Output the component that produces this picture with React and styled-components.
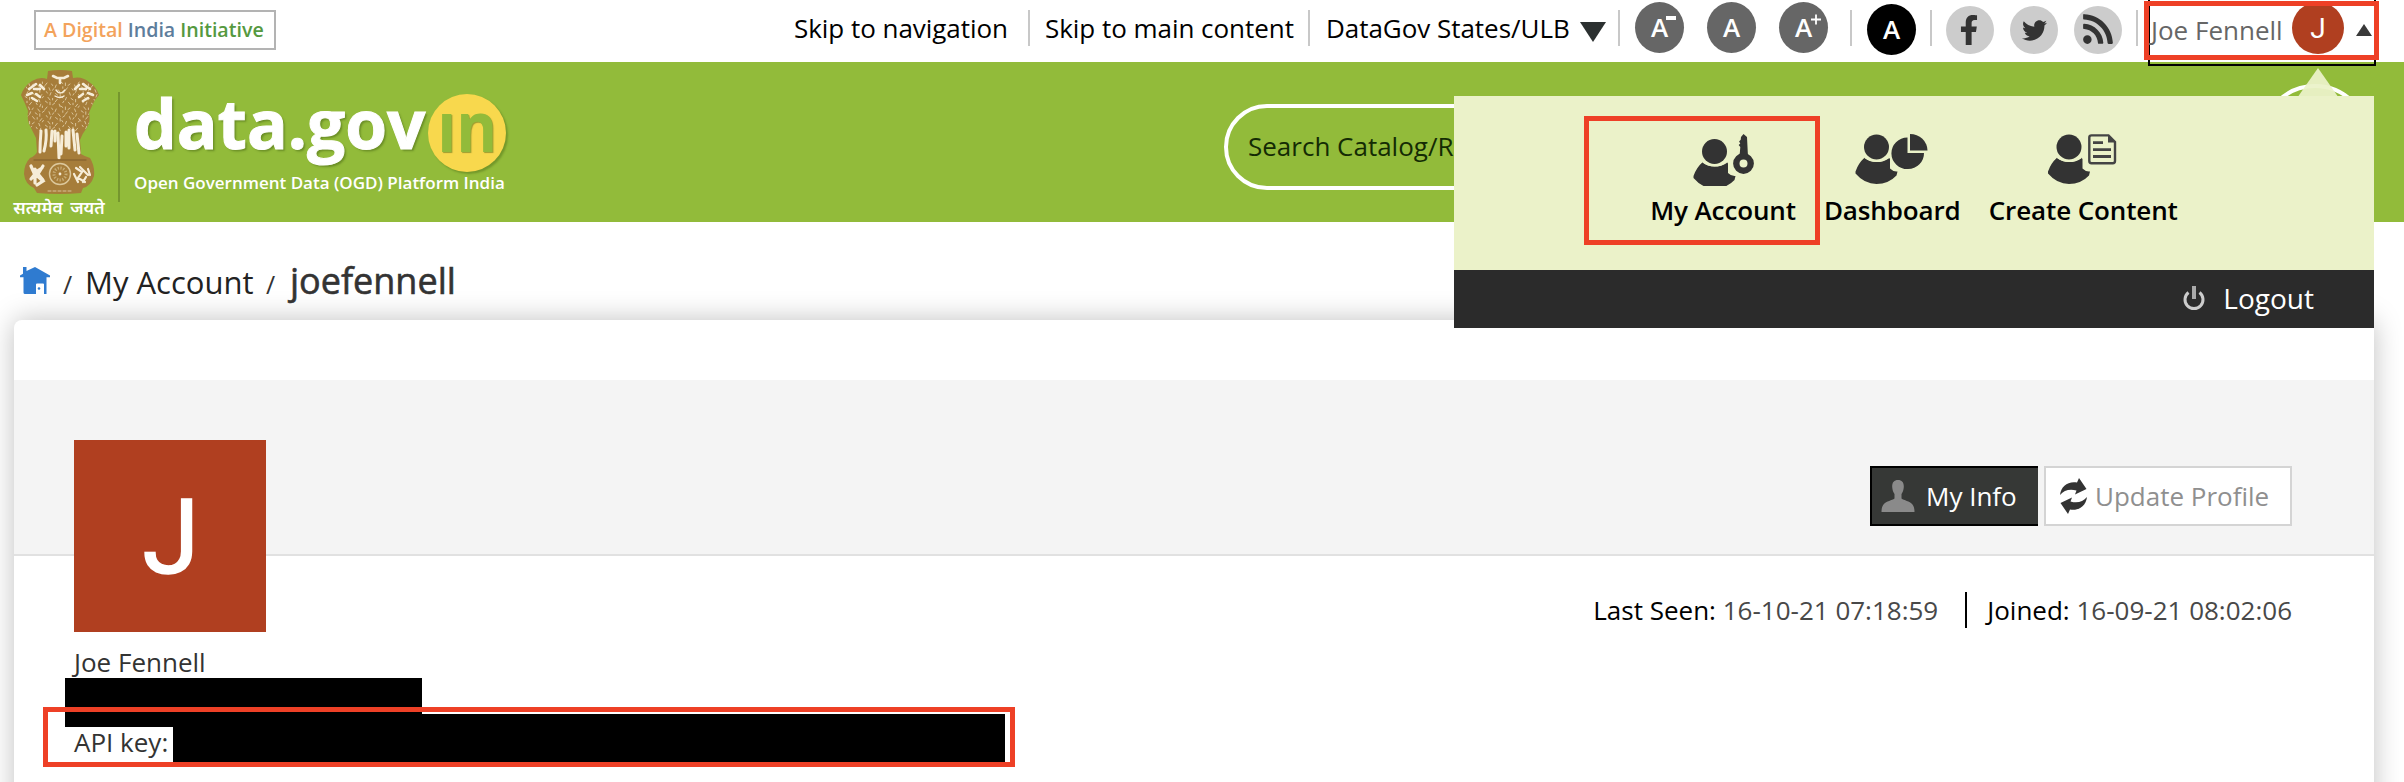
import React from "react";
import styled, { createGlobalStyle } from "styled-components";
import { FaFacebookF, FaTwitter, FaRss } from "react-icons/fa";

const GlobalStyle = createGlobalStyle`
  * { box-sizing: border-box; }
  html, body { margin: 0; padding: 0; }
  body {
    width: 2404px;
    height: 782px;
    overflow: hidden;
    background: #fff;
    color: #000;
    font-family: "Open Sans", "Noto Sans", sans-serif;
    font-size: 26px;
  }
`;

const Page = styled.div`
  position: relative;
  width: 2404px;
  height: 782px;
  overflow: hidden;
  white-space: nowrap;
`;

/* ---------- top bar ---------- */

const TopBar = styled.div`
  display: flex;
  align-items: flex-start;
  height: 62px;
  padding: 0 28px 0 34px;
`;

const InitiativeBadge = styled.div`
  display: flex;
  align-items: center;
  width: 242px;
  height: 40px;
  margin-top: 10px;
  padding: 0 0 2px 8px;
  border: 2px solid #b3b3b3;
  font-size: 19.6px;
  font-weight: 600;
  gap: 5px;
`;

const BadgeWord = styled.span`
  color: ${(p) => p.$color};
`;

const TopTools = styled.div`
  display: flex;
  align-items: flex-start;
  margin-left: auto;
`;

const TopLink = styled.a`
  flex: none;
  width: ${(p) => p.$width}px;
  padding-left: 1px;
  line-height: 56px;
  letter-spacing: -0.04px;
`;

const Separator = styled.span`
  flex: none;
  width: 2px;
  height: 36px;
  margin: 10px ${(p) => p.$after}px 0 ${(p) => p.$before}px;
  background: #c8c8c8;
`;

const DownArrow = styled.span`
  margin: 22px 0 0 11px;
  border: 13px solid transparent;
  border-top: 20px solid #2b3030;
  border-bottom: 0;
`;

const FontButtons = styled.div`
  display: flex;
  gap: 23px;
`;

const RoundButton = styled.span`
  flex: none;
  display: flex;
  align-items: center;
  justify-content: center;
  width: 49px;
  height: 51px;
  margin-top: ${(p) => (p.$dark ? 4 : 2)}px;
  border-radius: 50%;
  background: ${(p) => (p.$dark ? "#000" : "#666")};
  color: #fff;
  font-size: 26px;
  font-weight: 600;
  line-height: 51px;
  position: relative;
`;

const SizeMark = styled.svg`
  position: absolute;
  left: 31px;
  top: 11px;
  width: 12px;
  height: 13px;
`;

const SocialLinks = styled.div`
  display: flex;
  gap: 16px;
`;

const SocialButton = styled.span`
  flex: none;
  display: flex;
  align-items: center;
  justify-content: center;
  width: 48px;
  height: 48px;
  margin-top: 6px;
  border-radius: 50%;
  background: #ccc;
  color: #333;
  padding-bottom: ${(p) => p.$lift || 0}px;
  padding-right: ${(p) => p.$shift || 0}px;
`;

const UserToggle = styled.div`
  position: relative;
  z-index: 3;
  flex: none;
  display: flex;
  width: 228px;
  height: 66px;
  border: 2px solid #000;
  border-top: 0;
`;

const UserName = styled.span`
  width: 141px;
  padding-left: 1px;
  color: #666;
  line-height: 60px;
`;

const UserInitial = styled.span`
  flex: none;
  width: 52px;
  height: 52px;
  margin: 2px 0 0 1px;
  border-radius: 50%;
  background: #b03f20;
  color: #fff;
  font: 400 28px/54px Roboto, sans-serif;
  text-align: center;
`;

const UpArrow = styled.span`
  width: 0;
  height: 0;
  margin: 24px 0 0 12px;
  border: 8px solid transparent;
  border-bottom: 12px solid #3a3a3a;
  border-top: 0;
`;

/* ---------- green header ---------- */

const Header = styled.header`
  display: flex;
  align-items: flex-start;
  height: 160px;
  padding: 0 34px 0 13px;
  background: #92bb3a;
`;

const EmblemBlock = styled.div`
  width: 92px;
  padding-top: 8px;
  text-align: center;
`;

const EmblemArt = styled.svg`
  display: block;
  width: 80px;
  height: 124px;
  margin-left: 7px;
`;

const Motto = styled.div`
  margin-top: 0;
  color: #fff;
  font-size: 17.4px;
  font-weight: 600;
  line-height: 26px;
  word-spacing: 3px;
`;

const HeaderRule = styled.span`
  width: 2px;
  height: 110px;
  margin: 30px 14px 0 13px;
  background: #75962e;
`;

const SiteLogo = styled.div`
  color: #fff;
`;

const Wordmark = styled.div`
  display: flex;
  height: 122px;
`;

const WordmarkText = styled.span`
  width: 294px;
  font-size: 67.6px;
  font-weight: 700;
  line-height: 123px;
  -webkit-text-stroke: 1px #fff;
  text-shadow: 2px 2px 2px rgba(70, 100, 20, 0.5);
`;

const InDisc = styled.span`
  display: flex;
  justify-content: center;
  width: 78px;
  height: 78px;
  margin-top: 32px;
  border-radius: 50%;
  background: #f8d84d;
  box-shadow: 2px 2px 2px rgba(70, 100, 20, 0.4);
`;

const InText = styled.span`
  color: #92bb3a;
  font-size: 69px;
  font-weight: 700;
  line-height: 62px;
  transform: scaleX(0.9);
  text-shadow: 1px 1px 1px rgba(70, 100, 20, 0.5);
`;

const Tagline = styled.div`
  margin-top: -13px;
  font-size: 17px;
  font-weight: 600;
  line-height: 24px;
`;

const SearchBox = styled.div`
  width: 1000px;
  height: 86px;
  margin: 42px 36px 0 auto;
  padding-left: 20px;
  border: 4px solid #fff;
  border-radius: 43px;
  color: #142b04;
  line-height: 76px;
`;

const SearchButton = styled.span`
  flex: none;
  width: 110px;
  height: 110px;
  margin-top: 22px;
  border: 4px solid #fff;
  border-radius: 50%;
`;

/* ---------- account menu ---------- */

const AccountMenu = styled.div`
  position: absolute;
  z-index: 4;
  left: 1454px;
  top: 96px;
  width: 920px;
`;

const MenuPointer = styled.svg`
  position: absolute;
  left: 844px;
  top: -28px;
  width: 40px;
  height: 28px;
`;

const MenuLinks = styled.div`
  display: flex;
  justify-content: center;
  height: 174px;
  padding-top: 30px;
  gap: 28px;
  background: #ebf2c9;
`;

const MenuLink = styled.a`
  display: flex;
  flex-direction: column;
  font-weight: 600;
  line-height: 36px;
  letter-spacing: -0.12px;
`;

const MenuGlyph = styled.svg`
  display: block;
  align-self: center;
  width: 76px;
  height: 60px;
  margin-bottom: 6px;
`;

const LogoutBar = styled.div`
  display: flex;
  align-items: center;
  justify-content: flex-end;
  height: 58px;
  padding: 0 60px 3px 0;
  background: #2b2b2b;
  color: #fff;
  font-size: 28px;
  gap: 17px;
`;

/* ---------- breadcrumb ---------- */

const Breadcrumb = styled.nav`
  display: flex;
  align-items: baseline;
  height: 98px;
  padding-left: 20px;
  line-height: 118px;
`;

const Crumb = styled.span`
  width: 168px;
  color: #222;
  font-size: 31px;
`;

const CurrentCrumb = styled.span`
  color: #333;
  font-size: 36px;
  -webkit-text-stroke: 0.6px #333;
`;

const Slash = styled.span`
  width: ${(p) => p.$width}px;
  padding-left: 13px;
  color: #333;
  font-size: 25px;
`;

/* ---------- profile card ---------- */

const Card = styled.main`
  width: 2360px;
  height: 520px;
  margin-left: 14px;
  padding-top: 60px;
  border-radius: 8px;
  background: #fff;
  box-shadow: 0 0 28px rgba(0, 0, 0, 0.25);
`;

const Band = styled.div`
  display: flex;
  justify-content: flex-end;
  align-items: flex-start;
  height: 176px;
  padding: 86px 82px 0 0;
  border-bottom: 2px solid #e1e1e1;
  background: #f4f4f4;
  gap: 6px;
`;

const ActionButton = styled.a`
  display: flex;
  align-items: center;
  width: ${(p) => p.$width}px;
  height: 60px;
  padding-left: ${(p) => p.$inset}px;
  gap: ${(p) => p.$gap}px;
  border: 2px solid ${(p) => (p.$active ? "#000" : "#d4d4d4")};
  border-right-width: ${(p) => (p.$active ? 0 : 2)}px;
  background: ${(p) => (p.$active ? "#363836" : "#fff")};
  color: ${(p) => (p.$active ? "#fff" : "#8f8f8f")};

  svg {
    flex: none;
  }
`;

const Details = styled.div`
  display: flex;
  justify-content: space-between;
  padding: 0 82px 0 60px;
`;

const Identity = styled.div`
  margin-top: -116px;
  color: #333;
`;

const Portrait = styled.div`
  width: 192px;
  height: 192px;
  padding-left: 2px;
  background: #b03f20;
  color: #fff;
  font: 400 103px/195px Roboto, sans-serif;
  -webkit-text-stroke: 1.6px #fff;
  text-align: center;
`;

const IdentityLine = styled.div`
  height: ${(p) => p.$height}px;
  line-height: 36px;
  padding-top: ${(p) => p.$top}px;
`;

const Stats = styled.div`
  display: flex;
  height: 36px;
  margin-top: 36px;
  line-height: 36px;
`;

const Stat = styled.span`
  color: #484848;

  & + & {
    margin-left: 27px;
    padding-left: 20px;
    border-left: 2px solid #000;
  }
`;

const StatLabel = styled.span`
  color: #000;
`;

/* ---------- marks laid over the page ---------- */

const Redaction = styled.div`
  position: absolute;
  z-index: 5;
  left: ${(p) => p.$x}px;
  top: ${(p) => p.$y}px;
  width: ${(p) => p.$w}px;
  height: ${(p) => p.$h}px;
  background: #000;
`;

const Highlight = styled.div`
  position: absolute;
  z-index: 6;
  left: ${(p) => p.$x}px;
  top: ${(p) => p.$y}px;
  width: ${(p) => p.$w}px;
  height: ${(p) => p.$h}px;
  border: 5px solid #ee4026;
`;

/* ---------- drawings ---------- */

const SILHOUETTE =
  "M28 1 Q40 -1 52 1 L53 8 Q62 6 69 12 Q76 16 79 25 Q74 30 72 36 Q70 40 69 43 Q71 52 66 59 Q62 64 60 70 L61 84 Q64 86 70 88 Q75 96 74 106 Q71 116 63 118 L61 123 Q40 125 17 123 L14 118 Q5 114 4 104 Q4 94 10 88 Q15 86 17 82 L16 68 Q12 60 9 54 Q7 48 8 41 Q5 33 1 25 Q4 16 12 11 Q20 6 27 9 Z";

const flecks = Array.from({ length: 160 }, (_, i) => {
  const row = Math.floor(i / 16);
  const x = 5 + (i % 16) * 4.6 + ((row * 7) % 5) - 1;
  const y = 12 + row * 4.8 + ((i * 5) % 4);
  const dx = ((i * 3) % 5) - 2;
  return `M${x} ${y}l${dx} ${1.5 + (i % 2)}`;
}).join("");

function Emblem() {
  return (
    <EmblemArt viewBox="0 0 80 124">
      <clipPath id="emblem-body">
        <path d={SILHOUETTE} />
      </clipPath>
      <path d={SILHOUETTE} fill="#a67d3a" />
      <g clipPath="url(#emblem-body)" fill="none" stroke="#f6edd8" strokeLinecap="round">
        <path d={flecks} stroke="#d9c49a" strokeWidth="1" />
        <path d="M33 6l4 2h7l4-2M40 8v5" strokeWidth="2.6" />
        <path d="M36 20q4 6 9 0M35 26q5 3 9 0" strokeWidth="1.4" />
        <path d="M9 19l7-5M7 25l5-2M16 24l4 3M14 19l6 0M12 28l5 3M20 15l4 4" strokeWidth="2.6" />
        <path d="M70 19l-7-5M73 25l-5-2M63 24l-4 3M66 19l-6 0M68 28l-5 3M59 15l-4 4" strokeWidth="2.6" />
        <path
          d="M21 61q-1 12-1 21M26 60q1 10-2 21M32 61l-1 15M38 63l1 25M42 66l-1 18M49 60v18M53 60l2 20M57 64l2 19M35 61v10M46 62v14"
          strokeWidth="3"
        />
        <path d="M14 90h52" stroke="#8c6730" strokeWidth="1.4" />
        <path d="M11 96l3 7 8-5M11 109l4-5 8 7-6 4M15 99v14M23 96l-5 8 5 6" strokeWidth="3.2" />
        <path d="M56 98l6 4-4 6 7 4M60 97l8 8M54 104l4 8M66 107l-3 5M68 99l2 6" strokeWidth="2.2" />
        <circle cx="40" cy="104" r="10.5" stroke="#dcc89c" strokeWidth="1.4" />
        <circle cx="40" cy="104" r="6" stroke="#c8ae78" strokeWidth="3" strokeDasharray="1.2 1.6" strokeLinecap="butt" />
        <circle cx="40" cy="104" r="0.8" strokeWidth="1.2" />
        <path d="M28 121h24" stroke="#d9c49a" strokeWidth="1" strokeDasharray="3 2" />
      </g>
    </EmblemArt>
  );
}

function HomeIcon() {
  return (
    <svg width="30" height="27" viewBox="0 0 30 27">
      <path
        fill="#2f7bd0"
        fillRule="evenodd"
        d="M3 0h3.5v4L15 0l15 8.500v1.800h-3.500V27H24v-9.500q0-1-1-1h-6q-1 0-1 1V27H5q-1.500 0-1.500-1.500V10.300H0V8.500L3 6.800Z"
      />
      <circle cx="19" cy="21.500" r="1.300" fill="#2f7bd0" />
    </svg>
  );
}

function PersonShape({ y = 0 }) {
  return (
    <g transform={`translate(0 ${y})`} fill="#333">
      <circle cx="21" cy="13" r="12.500" />
      <path d="M0 37.500Q3 29 9 23.800Q14 28 21 28T33.500 23.800L34.500 25V34.500Q38 38 42 37.500L41 41.500Q33 50 21 50T0 39.500Z" />
      <path d="M9.500 23.300Q14.500 27 21 27T33 23.300" fill="none" stroke="#ebf2c9" strokeWidth="2" />
    </g>
  );
}

function AccountGlyph() {
  return (
    <MenuGlyph viewBox="-8.500 -8 76 60">
      <PersonShape y={4.500} />
      <circle cx="50" cy="29.500" r="7.200" fill="none" stroke="#333" strokeWidth="6.400" />
      <path fill="#333" d="M47.500 3L50 0l3.500 3 1 20h-8.500l.8-10-1.600-2 1.600-1.600-1.200-2 1.600-1.600Z" />
    </MenuGlyph>
  );
}

function DashboardGlyph() {
  return (
    <MenuGlyph viewBox="-1.500 -8 76 60">
      <PersonShape />
      <path fill="#333" d="M52 3.500V19H68.500A16.300 15.800 0 1 1 52 3.500Z" />
      <path fill="#333" d="M54.500 0A17.500 16.500 0 0 1 72 16.500H54.500Z" />
    </MenuGlyph>
  );
}

function ContentGlyph() {
  return (
    <MenuGlyph viewBox="-3 -8 76 60">
      <PersonShape />
      <path fill="none" stroke="#444" strokeWidth="2.400" d="M43.500 1.400H60.500L67 8V27q0 2.200-2.200 2.200H43.500q-2.200 0-2.200-2.200V3.600q0-2.200 2.200-2.200Z" />
      <path fill="#444" d="M60 1v7.500h7.500Z" />
      <path stroke="#444" strokeWidth="2.800" d="M45 8.700H55M45 15.700H63M45 22.500H63" />
    </MenuGlyph>
  );
}

function PersonIcon() {
  return (
    <svg width="34" height="32" viewBox="0 0 34 32">
      <path
        fill="#8a8a8a"
        d="M17 0c4 0 6 2.600 5.800 7-.2 3-1 5-2.300 7v4.500c2.500 2 8 2.500 11 6 1.500 2 2 4.500 2 7.500H.5c0-3 .5-5.500 2-7.500 3-3.500 8.500-4 11-6V14c-1.300-2-2.100-4-2.300-7C11 2.600 13 0 17 0Z"
      />
    </svg>
  );
}

function RefreshIcon() {
  return (
    <svg width="27" height="36" viewBox="0 0 27 36">
      <g fill="#333">
        <path d="M0 17C1 8 8 3 17 4.500L19 0l7.500 11L15 16.500l1.500-4C10 10.500 4 12 0 17Z" />
        <path d="M27 19C26 28 19 33 10 31.500L8 36 .5 25 12 19.500l-1.500 4C17 25.500 23 24 27 19Z" />
      </g>
    </svg>
  );
}

function PowerIcon() {
  return (
    <svg width="24" height="26" viewBox="0 0 24 26">
      <path d="M6.500 7.500A9 9 0 1 0 17.500 7.500" fill="none" stroke="#ccc" strokeWidth="3" />
      <path d="M12 1v13" stroke="#aaa" strokeWidth="4" />
    </svg>
  );
}

export default function App() {
  return (
    <Page>
      <GlobalStyle />
      <TopBar>
        <InitiativeBadge>
          <BadgeWord $color="#f3a35c">A Digital</BadgeWord>
          <BadgeWord $color="#5d7d9c">India</BadgeWord>
          <BadgeWord $color="#55993f">Initiative</BadgeWord>
        </InitiativeBadge>
        <TopTools>
          <TopLink $width={215}>Skip to navigation</TopLink>
          <Separator $before={20} $after={14} />
          <TopLink $width={250}>Skip to main content</TopLink>
          <Separator $before={14} $after={15} />
          <TopLink $width={244}>DataGov States/ULB</TopLink>
          <DownArrow />
          <Separator $before={12} $after={15} />
          <FontButtons>
            <RoundButton>
              A
              <SizeMark viewBox="0 0 12 13">
                <path d="M0 5h10" stroke="#fff" strokeWidth="4" />
              </SizeMark>
            </RoundButton>
            <RoundButton>A</RoundButton>
            <RoundButton>
              A
              <SizeMark viewBox="0 0 12 13">
                <path d="M1 6.500h10M6 1.500v10" stroke="#fff" strokeWidth="1.800" />
              </SizeMark>
            </RoundButton>
          </FontButtons>
          <Separator $before={22} $after={15} />
          <RoundButton $dark>A</RoundButton>
          <Separator $before={14} $after={14} />
          <SocialLinks>
            <SocialButton $shift={3}>
              <FaFacebookF size={30} />
            </SocialButton>
            <SocialButton>
              <FaTwitter size={25} />
            </SocialButton>
            <SocialButton $lift={2}>
              <FaRss size={34} />
            </SocialButton>
          </SocialLinks>
          <Separator $before={14} $after={10} />
          <UserToggle>
            <UserName>Joe Fennell</UserName>
            <UserInitial>J</UserInitial>
            <UpArrow />
          </UserToggle>
        </TopTools>
      </TopBar>

      <Header>
        <EmblemBlock>
          <Emblem />
          <Motto>सत्यमेव जयते</Motto>
        </EmblemBlock>
        <HeaderRule />
        <SiteLogo>
          <Wordmark>
            <WordmarkText>data.gov</WordmarkText>
            <InDisc>
              <InText>ın</InText>
            </InDisc>
          </Wordmark>
          <Tagline>Open Government Data (OGD) Platform India</Tagline>
        </SiteLogo>
        <SearchBox>Search Catalog/R</SearchBox>
        <SearchButton />
      </Header>

      <Breadcrumb>
        <HomeIcon />
        <Slash $width={35}>/</Slash>
        <Crumb>My Account</Crumb>
        <Slash $width={37}>/</Slash>
        <CurrentCrumb>joefennell</CurrentCrumb>
      </Breadcrumb>

      <Card>
        <Band>
          <ActionButton $active $width={168} $inset={9} $gap={11}>
            <PersonIcon />
            My Info
          </ActionButton>
          <ActionButton $width={248} $inset={14} $gap={8}>
            <RefreshIcon />
            Update Profile
          </ActionButton>
        </Band>
        <Details>
          <Identity>
            <Portrait>J</Portrait>
            <IdentityLine $height={60} $top={12}>Joe Fennell</IdentityLine>
            <IdentityLine $height={56} $top={32}>API key:</IdentityLine>
          </Identity>
          <Stats>
            <Stat>
              <StatLabel>Last Seen:</StatLabel> 16-10-21 07:18:59
            </Stat>
            <Stat>
              <StatLabel>Joined:</StatLabel> 16-09-21 08:02:06
            </Stat>
          </Stats>
        </Details>
      </Card>

      <AccountMenu>
        <MenuPointer viewBox="0 0 40 28">
          <path d="M20 0L34 20L39.500 28H.5L6 20Z" fill="#ebf2c9" fillOpacity="0.94" />
        </MenuPointer>
        <MenuLinks>
          <MenuLink>
            <AccountGlyph />
            My Account
          </MenuLink>
          <MenuLink>
            <DashboardGlyph />
            Dashboard
          </MenuLink>
          <MenuLink>
            <ContentGlyph />
            Create Content
          </MenuLink>
        </MenuLinks>
        <LogoutBar>
          <PowerIcon />
          Logout
        </LogoutBar>
      </AccountMenu>

      <Redaction $x={65} $y={678} $w={357} $h={49} />
      <Redaction $x={173} $y={714} $w={832} $h={48} />
      <Highlight $x={43} $y={707} $w={972} $h={60} />
      <Highlight $x={1584} $y={116} $w={236} $h={129} />
      <Highlight $x={2144} $y={1} $w={235} $h={59} />
    </Page>
  );
}
